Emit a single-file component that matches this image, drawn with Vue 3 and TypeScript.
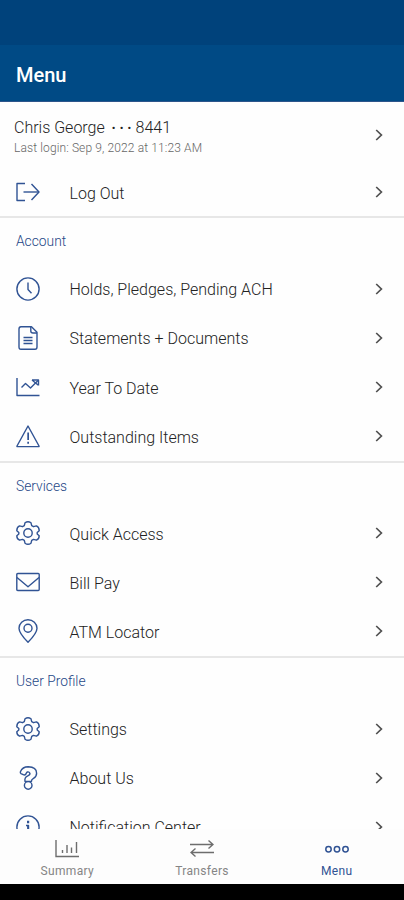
<script setup lang="ts">
type IconName =
  | 'logout' | 'clock' | 'document' | 'chart' | 'warning'
  | 'gear' | 'mail' | 'pin' | 'question' | 'info'

interface MenuItem {
  label: string
  icon: IconName
}

interface MenuSection {
  title: string
  items: MenuItem[]
}

const icons: Record<IconName, string[]> = {
  logout: ['M9 3.5H1V20.5H9', 'M7.5 12H23', 'M15.5 4L23 12L15.5 20'],
  clock: ['M12 .9A11.1 11.1 0 1 1 12 23.1A11.1 11.1 0 1 1 12 .9Z', 'M12 5.5V12.5L15.5 16.2'],
  document: ['M5 .8H15.5L21 6.3V21Q21 23.2 19 23.2H5Q3 23.2 3 21V3Q3 .8 5 .8Z', 'M14.8 1V5Q14.8 7 17 7H21', 'M7.5 11.5H16.5M7.5 14.5H16.5M7.5 17.5H16.5'],
  chart: ['M1 3V20.5H23.5', 'M5.5 12.5L9.5 8.5L14.5 13L22 5.5', 'M16 5H22.5V10.5M16 5L22 10'],
  warning: ['M12 2L23 22Q23.3 22.6 22.5 22.6H1.5Q.7 22.6 1 22Z', 'M12 8.5V16M12.3 8.5V16M12 17.7V19.8M12.3 17.7V19.8'],
  gear: [
    'M9 1.8Q12-.3 15 1.8L15.7 4.7L17.5 5.7L20.4 4.9Q23.3 6.1 23.2 9.7L21.2 11.5V13L23.2 14.7Q23.2 18 20.4 19.2L17.5 18.4L15.7 19.4L15 22.2Q12 24.3 9 22.2L8.3 19.4L6.5 18.4L3.6 19.2Q.8 18 .8 14.7L2.8 13V11.5L.8 9.7Q.8 6.1 3.6 4.9L6.5 5.7L8.3 4.7Z',
    'M12 7.8A4.2 4.2 0 1 1 12 16.2A4.2 4.2 0 1 1 12 7.8Z',
  ],
  mail: ['M1.8 3.5H22.2Q23.2 3.5 23.2 4.5V19.5Q23.2 20.5 22.2 20.5H1.8Q.8 20.5 .8 19.5V4.5Q.8 3.5 1.8 3.5Z', 'M1 7.5L12 16.8L23 7.5'],
  pin: ['M12 23.3Q3 14 3 9.2A9 8.5 0 0 1 21 9.2Q21 14 12 23.3Z', 'M12 5.3A4 4 0 1 1 12 13.3A4 4 0 1 1 12 5.3Z'],
  question: [
    'M4.4 5.8Q6.5 .8 12.2 .8Q20.6 1 20.6 7.2Q20.6 10.6 17.5 12.3Q15.2 13.6 15.5 15.4H9Q8.2 11.4 11.8 9.9Q14.3 8.9 13.9 7.2Q13 5.4 11.3 6Q10.5 6.4 9.8 8.2Q8.8 9.4 7.2 8.6L5 7.6Q4 7 4.4 5.8Z',
    'M12.2 15.6A3.8 3.8 0 1 1 12.2 23.2A3.8 3.8 0 1 1 12.2 15.6Z',
  ],
  info: ['M12 .9A11.1 11.1 0 1 1 12 23.1A11.1 11.1 0 1 1 12 .9Z', 'M11.7 5.8V8.2M12.5 5.8V8.2M10 10.5H12.5V18M11.8 10.5V18M10 18H14.5'],
}

const sections: MenuSection[] = [
  {
    title: 'Account',
    items: [
      { label: 'Holds, Pledges, Pending ACH', icon: 'clock' },
      { label: 'Statements + Documents', icon: 'document' },
      { label: 'Year To Date', icon: 'chart' },
      { label: 'Outstanding Items', icon: 'warning' },
    ],
  },
  {
    title: 'Services',
    items: [
      { label: 'Quick Access', icon: 'gear' },
      { label: 'Bill Pay', icon: 'mail' },
      { label: 'ATM Locator', icon: 'pin' },
    ],
  },
  {
    title: 'User Profile',
    items: [
      { label: 'Settings', icon: 'gear' },
      { label: 'About Us', icon: 'question' },
      { label: 'Notification Center', icon: 'info' },
    ],
  },
]
</script>

<template>
  <div class="screen">
    <div class="status"></div>
    <header class="header"><h1>Menu</h1></header>
    <main class="content">
      <div class="user">
        <div class="who">
          <div class="name">Chris George<span class="dots">•••</span>8441</div>
          <div class="login">Last login: Sep 9, 2022 at 11:23 AM</div>
        </div>
        <svg class="chevron" viewBox="0 0 8 12"><path d="M1.2 1L6.4 6L1.2 11" /></svg>
      </div>
      <div class="row logout">
        <svg class="icon" viewBox="0 0 24 24"><path v-for="d in icons.logout" :key="d" :d="d" /></svg>
        <span class="label">Log Out</span>
        <svg class="chevron" viewBox="0 0 8 12"><path d="M1.2 1L6.4 6L1.2 11" /></svg>
      </div>
      <section v-for="section in sections" :key="section.title" class="section">
        <h2>{{ section.title }}</h2>
        <div v-for="item in section.items" :key="item.label" class="row">
          <svg class="icon" viewBox="0 0 24 24"><path v-for="d in icons[item.icon]" :key="d" :d="d" /></svg>
          <span class="label">{{ item.label }}</span>
          <svg class="chevron" viewBox="0 0 8 12"><path d="M1.2 1L6.4 6L1.2 11" /></svg>
        </div>
      </section>
    </main>
    <nav class="tabs">
      <div class="tab">
        <svg viewBox="0 0 24 20"><path d="M1 1V17.5H24" /><path d="M7.5 11V14M12 6V14M16.5 8.5V14M21.5 3V14" /></svg>
        <span>Summary</span>
      </div>
      <div class="tab">
        <svg viewBox="0 0 24 20"><path d="M0 5.5H23M18.5 1.5L23 5.5L18.5 9.5" /><path d="M24 13.5H1M5.5 9.5L1 13.5L5.5 17.5" /></svg>
        <span>Transfers</span>
      </div>
      <div class="tab active">
        <svg viewBox="0 0 24 20"><circle cx="3.5" cy="10.2" r="2.7" /><circle cx="12" cy="10.2" r="2.7" /><circle cx="20.5" cy="10.2" r="2.7" /></svg>
        <span>Menu</span>
      </div>
    </nav>
    <div class="system"></div>
  </div>
</template>

<style>
body { margin: 0; background: #000; }
</style>

<style scoped>
.screen {
  width: 404px;
  height: 900px;
  display: flex;
  flex-direction: column;
  overflow: hidden;
  background: #fff;
  font-family: Roboto, "Liberation Sans", sans-serif;
}
.screen * { box-sizing: border-box; }
svg { fill: none; flex: none; display: block; }
.status { height: 45px; flex: none; background: #00427b; }
.header {
  height: 57px;
  flex: none;
  display: flex;
  align-items: center;
  padding: 4px 16px 0;
  background: #004a85;
  border-bottom: 1px solid #2d558b;
}
h1 { margin: 0; font-size: 20px; line-height: 24px; font-weight: 500; color: #fff; }
.content { flex: 1; min-height: 0; overflow: hidden; background: #fefefe; }
.user {
  height: 66px;
  display: flex;
  align-items: center;
  justify-content: space-between;
  padding: 0 20px 0 14px;
}
.who { padding-top: 3px; }
.name { font-size: 16px; line-height: 20px; font-weight: 300; color: #222; white-space: nowrap; }
.dots { font-size: 11px; font-weight: 400; letter-spacing: 4.2px; margin-left: 7px; position: relative; top: -1px; }
.login { font-size: 12px; line-height: 16px; font-weight: 300; letter-spacing: 0.12px; color: #666; white-space: nowrap; }
.row { height: 49.1px; display: flex; align-items: center; padding: 0 20px 0 16px; }
.logout { height: 48.3px; }
.icon { width: 24px; height: 24px; stroke: #305394; stroke-width: 1.4; stroke-linejoin: round; }
.label { flex: 1; margin-left: 29.5px; padding-top: 3px; font-size: 16px; line-height: 20px; font-weight: 300; color: #222; white-space: nowrap; }
.chevron { width: 8px; height: 12px; margin-right: 1px; stroke: #505050; stroke-width: 1.7; }
.section { border-top: 2px solid #e7e7e7; }
h2 {
  margin: 0;
  height: 46px;
  padding: 1px 16px 0;
  line-height: 45px;
  font-size: 13.8px;
  font-weight: 300;
  color: #254786;
}
.tabs { height: 55px; flex: none; display: flex; background: #fdfdfd; }
.tab {
  flex: 1;
  display: flex;
  flex-direction: column;
  align-items: center;
  padding-top: 10px;
  gap: 4px;
  color: #858585;
  font-size: 12px;
  line-height: 16px;
  letter-spacing: 0.35px;
}
.tab svg { width: 24px; height: 20px; stroke: #6d6d6d; stroke-width: 1.4; }
.active { color: #305394; }
.active svg { stroke: #305394; stroke-width: 1.5; }
.system { height: 16px; flex: none; background: #000; }
</style>
